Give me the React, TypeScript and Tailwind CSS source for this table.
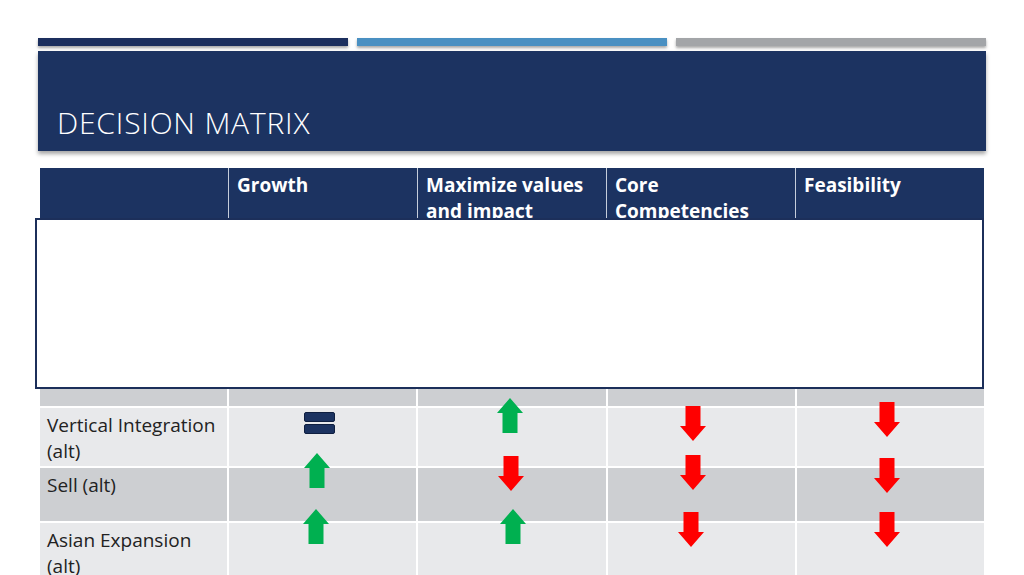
import React from "react";

type Mark = { kind: "up" | "down" | "eq"; x: number; y: number };

// positions are relative to the table's top-left corner
const marks: Mark[] = [
  { kind: "eq", x: 264, y: 244 },
  { kind: "up", x: 457, y: 230 },
  { kind: "down", x: 640, y: 238 },
  { kind: "down", x: 834, y: 234 },
  { kind: "up", x: 264, y: 285 },
  { kind: "down", x: 458, y: 288 },
  { kind: "down", x: 640, y: 287 },
  { kind: "down", x: 834, y: 290 },
  { kind: "up", x: 263, y: 341 },
  { kind: "up", x: 460, y: 341 },
  { kind: "down", x: 638, y: 344 },
  { kind: "down", x: 834, y: 344 },
];

const headers = ["", "Growth", "Maximize values and impact", "Core Competencies", "Feasibility"];

const rows = [
  { label: "", dark: true, h: "h-[175px]" },
  { label: "Vertical Integration (alt)", dark: false, h: "h-[58px]" },
  { label: "Sell (alt)", dark: true, h: "h-[53px]" },
  { label: "Asian Expansion (alt)", dark: false, h: "h-[64px]" },
];

function Arrow({ kind }: { kind: "up" | "down" }) {
  if (kind === "up")
    return (
      <svg width="26" height="35" viewBox="0 0 26 35">
        <path d="M13 0 L26 15 L20.5 15 L20.5 35 L5.5 35 L5.5 15 L0 15 Z" fill="#00b050" />
      </svg>
    );
  return (
    <svg width="26" height="35" viewBox="0 0 26 35">
      <path d="M13 35 L26 20 L20.5 20 L20.5 0 L5.5 0 L5.5 20 L0 20 Z" fill="#ff0000" />
    </svg>
  );
}

function Equals() {
  return (
    <svg width="31" height="22" viewBox="0 0 31 22">
      <rect x="0.5" y="0.5" width="30" height="9" rx="1.5" fill="#1c3361" stroke="#0f1f40" />
      <rect x="0.5" y="12.5" width="30" height="9" rx="1.5" fill="#1c3361" stroke="#0f1f40" />
    </svg>
  );
}

export default function App() {
  return (
    <div className="relative h-[575px] w-[1024px] overflow-hidden bg-white font-['Open_Sans',sans-serif]">
      <div className="px-[38px] pt-[38px]">
        <div className="flex h-[8px] gap-[9px]">
          <div className="flex-1 bg-[#1c2f5e] shadow-[0_2px_3px_rgba(0,0,0,0.35)]" />
          <div className="flex-1 bg-[#4a90c2] shadow-[0_2px_3px_rgba(0,0,0,0.35)]" />
          <div className="flex-1 bg-[#a3a5a8] shadow-[0_2px_3px_rgba(0,0,0,0.35)]" />
        </div>
        <div className="mt-[5px] flex h-[100px] items-end bg-[#1c3361] pb-[8px] pl-[19px] shadow-[0_3px_4px_rgba(0,0,0,0.35)]">
          <h1 className="text-[30px] font-light leading-[40px] tracking-[0.8px] text-white">
            DECISION MATRIX
          </h1>
        </div>
      </div>

      <div className="relative mx-[40px] mt-[17px]">
        <div className="flex flex-col gap-[2px] bg-white">
          <div className="grid h-[61px] grid-cols-5 gap-x-[1px] bg-[#c5cddb]">
            {headers.map((h, i) => (
              <div key={i} className="bg-[#1c3361] px-2 pt-1 text-[19px] font-bold leading-[26px] text-white">
                {h}
              </div>
            ))}
          </div>
          {rows.map((r, i) => (
            <div key={i} className={`grid grid-cols-5 gap-x-[2px] ${r.h}`}>
              {[0, 1, 2, 3, 4].map((c) => (
                <div
                  key={c}
                  className={`${r.dark ? "bg-[#cdcfd2]" : "bg-[#e8e9eb]"} px-[7px] pt-1 text-[19px] leading-[26px] text-[#222]`}
                >
                  {c === 0 ? r.label : null}
                </div>
              ))}
            </div>
          ))}
        </div>

        <div className="absolute -left-[5px] right-0 top-[50px] h-[171px] border-2 border-[#1c2f5a] bg-white" />

        {marks.map((m, i) => (
          <div key={i} className="absolute" style={{ left: m.x, top: m.y }}>
            {m.kind === "eq" ? <Equals /> : <Arrow kind={m.kind} />}
          </div>
        ))}
      </div>
    </div>
  );
}
